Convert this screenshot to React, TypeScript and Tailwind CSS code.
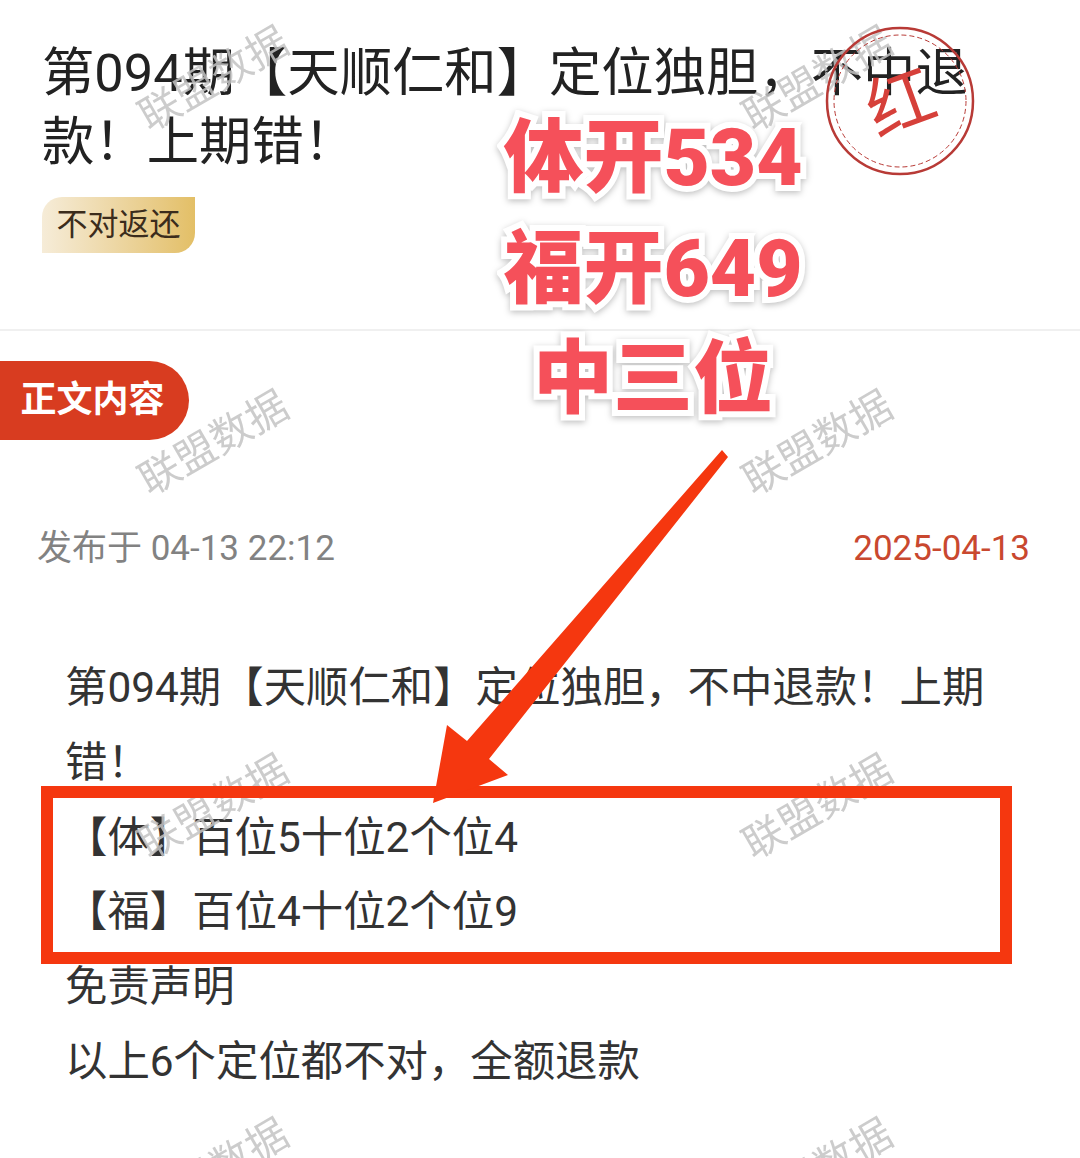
export default function App() {
  const marks = [0, 1, 2, 3, 4, 5, 6, 7];
  const bigText = ["体开534", "福开649", "中三位"];
  const font = "font-['Roboto','Noto_Sans_CJK_SC',sans-serif]";
  return (
    <div className={`relative w-[1080px] h-[1158px] overflow-hidden bg-white ${font}`}>
      <header className="h-[331px] border-b-2 border-[#f0f0f0] pl-[42px] pr-[100px] pt-[39px]">
        <h1 className="text-[52.35px] leading-[69px] font-normal text-[#222222]">
          第094期【天顺仁和】定位独胆&#xFF0C;不中退款&#xFF01;上期错&#xFF01;
        </h1>
        <div className="mt-[20px] flex h-[56px] w-[153px] items-center justify-center rounded-tl-[20px] rounded-br-[20px] bg-gradient-to-r from-[#f6ecd8] to-[#e3bf66] text-[31px] text-[#3b2c1c]">
          不对返还
        </div>
      </header>

      <div className="mt-[30px] flex h-[79px] w-[189px] items-center justify-center rounded-r-[40px] bg-[#d83c20] pb-[2px] pr-[4px] text-[36px] font-bold text-white">
        正文内容
      </div>

      <div className="mt-[85px] flex items-center justify-between pl-[37px] pr-[50px] text-[35px] leading-[48px]">
        <span className="text-[#828282]">发布于 04-13 22:12</span>
        <span className="text-[#c9482f]">2025-04-13</span>
      </div>

      <article className="mt-[78px] pl-[65px] text-[42.4px] leading-[74.8px] text-[#333333]">
        <p>第094期【天顺仁和】定位独胆&#xFF0C;不中退款&#xFF01;上期</p>
        <p>错&#xFF01;</p>
        <p>【体】百位5十位2个位4</p>
        <p>【福】百位4十位2个位9</p>
        <p>免责声明</p>
        <p>以上6个定位都不对&#xFF0C;全额退款</p>
      </article>

      <div className="pointer-events-none absolute -left-[88px] -top-[102px] grid grid-cols-[604px_604px] auto-rows-[364px]">
        {marks.map((m) => (
          <div key={m} className="flex items-center justify-center">
            <span className="-rotate-[30deg] whitespace-nowrap text-[41px] text-[#c4c4c4] opacity-85">联盟数据</span>
          </div>
        ))}
      </div>

      <svg className="pointer-events-none absolute right-[104px] top-[25px] h-[152px] w-[152px]" viewBox="0 0 152 152">
        <circle cx="76" cy="76" r="73" fill="none" stroke="#b83a36" strokeWidth="2.5" />
        <circle cx="76" cy="76" r="66" fill="none" stroke="#b83a36" strokeWidth="1" strokeDasharray="5 3" />
        <text x="76" y="102" textAnchor="middle" transform="rotate(-20 76 76)" fontSize="68" fontWeight="400" fill="#d6403a" fontFamily="Noto Sans CJK SC, sans-serif">红</text>
      </svg>

      <div className="absolute left-[353px] top-[103px] w-[600px] text-center text-[80px] font-black leading-[110.5px] text-[#f5505a] [-webkit-text-stroke:12px_white] [paint-order:stroke_fill] drop-shadow-[0_2px_3px_rgba(0,0,0,0.25)]">
        {bigText.map((t) => (
          <div key={t}>{t}</div>
        ))}
      </div>

      <div className="absolute left-[41px] top-[786px] h-[178px] w-[971px] border-[12px] border-[#f5370f]" />

      <svg className="pointer-events-none absolute left-0 top-0 h-[1158px] w-[1080px]" viewBox="0 0 1080 1158">
        <polygon points="722,450 728,457 489,759 508,775 433,803 447,725 467,741" fill="#f5370f" />
      </svg>
    </div>
  );
}
